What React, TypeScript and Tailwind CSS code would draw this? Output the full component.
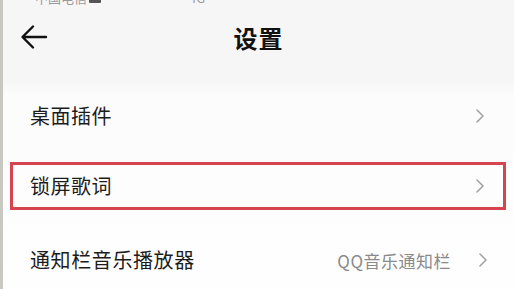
import React from "react";

const Chevron = () => (
  <svg width="8" height="14" viewBox="0 0 8 14" fill="none" className="shrink-0">
    <path d="M1 1 L7 7 L1 13" stroke="#a3a3a3" strokeWidth="1.6" strokeLinecap="round" strokeLinejoin="round" />
  </svg>
);

export default function App() {
  const font = { fontFamily: '"Noto Sans CJK SC", "Noto Sans", sans-serif' };
  return (
    <div
      className="w-[514px] h-[289px] overflow-hidden flex bg-[#fdfdfd] text-[#1c1c1c]"
      style={font}
    >
      <div className="w-[3px] shrink-0 bg-[#c8c8c0]" />
      <div className="flex-1 flex flex-col relative bg-[linear-gradient(to_bottom,#f7f6f6_0px,#f7f6f6_80px,#fdfcfd_96px,#fefefe_100%)]">
        {/* header */}
        <div className="h-[80px] flex flex-col shrink-0">
          <div className="h-[8px] shrink-0 overflow-hidden flex items-start text-[13px] text-[#9a9a9a] leading-none">
            <div className="-mt-[9px] ml-[32px] flex items-center gap-[2px]">
              <span>中国电信</span>
              <span className="w-[12px] h-[10px] bg-[#555] rounded-[1px]" />
            </div>
            <div className="-mt-[9px] ml-[88px]">4G</div>
          </div>
          <div className="h-[60px] shrink-0 relative flex items-center justify-center">
            <svg width="28" height="26" viewBox="0 0 28 26" fill="none" className="absolute left-[17px] top-[16px]">
              <path d="M26 13 H3 M13 2.5 L2.5 13 L13 23.5" stroke="#111" strokeWidth="2.4" strokeLinecap="round" strokeLinejoin="round" />
            </svg>
            <span className="text-[24px] font-bold tracking-[1px] text-[#111] leading-none">设置</span>
          </div>
        </div>
        {/* row 1 */}
        <div className="h-[72px] shrink-0 flex items-center justify-between pl-[27px] pr-[30px]">
          <span className="text-[20px] tracking-[0.5px] leading-none">桌面插件</span>
          <Chevron />
        </div>
        {/* row 2 highlighted */}
        <div className="h-[70px] shrink-0 pt-[10px] pl-[7px] pr-[8px]">
          <div className="h-[48px] border-[3px] border-[#d6444f] flex items-center justify-between pl-[17px] pr-[19px]">
            <span className="text-[20px] tracking-[0.5px] leading-none">锁屏歌词</span>
            <Chevron />
          </div>
        </div>
        {/* row 3 */}
        <div className="h-[76px] shrink-0 flex items-center justify-between pl-[27px] pr-[27px]">
          <span className="text-[20px] tracking-[0.6px] leading-none">通知栏音乐播放器</span>
          <div className="flex items-center gap-[28px]">
            <span className="text-[17px] text-[#8a8a8a] leading-none tracking-[0.5px]">QQ音乐通知栏</span>
            <Chevron />
          </div>
        </div>
      </div>
    </div>
  );
}
